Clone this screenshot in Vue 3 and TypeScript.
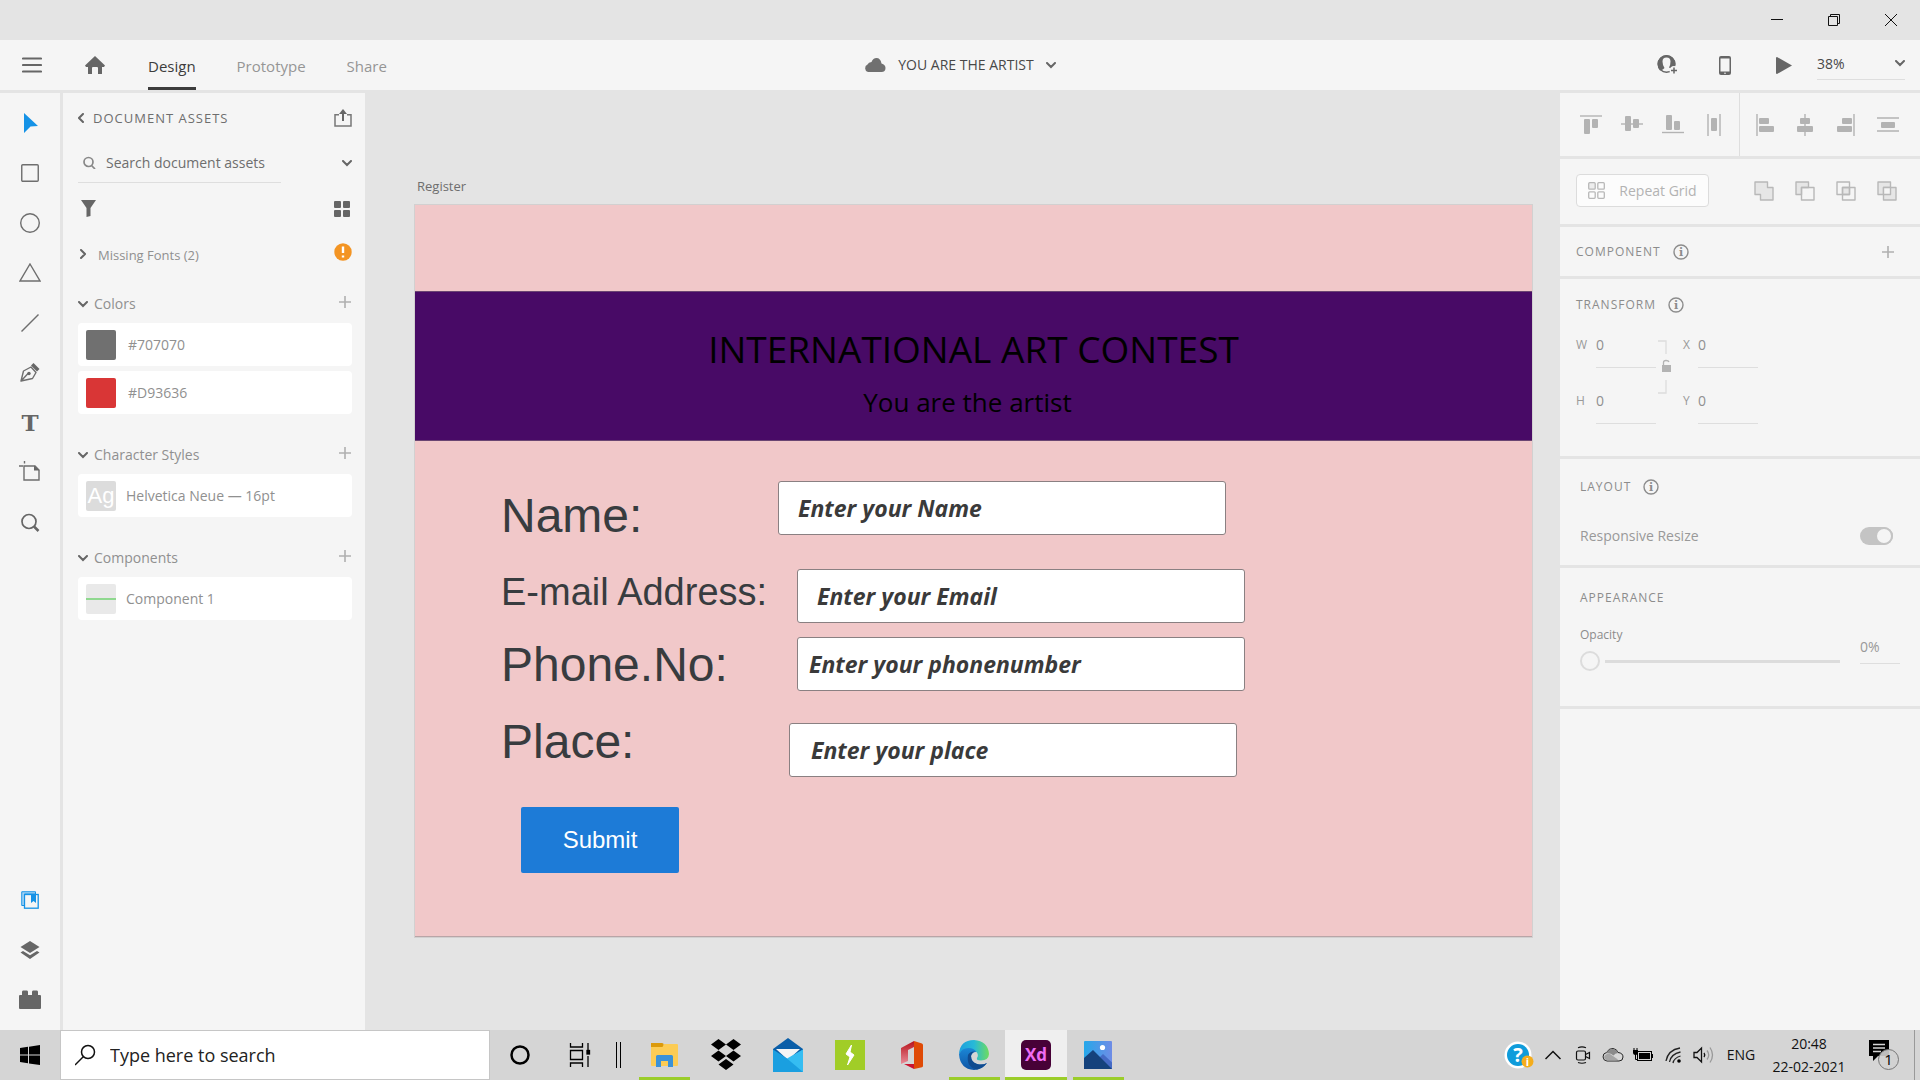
<script setup lang="ts">
import { ref } from 'vue'

interface Field {
  id: string
  label: string
  hint: string
  small?: boolean
  labelTop: number
  left: number
  top: number
  pad: number
}

const fields: Field[] = [
  { id: 'name', label: 'Name:', hint: 'Enter your Name', labelTop: 283, left: 363, top: 276, pad: 19 },
  { id: 'email', label: 'E-mail Address:', hint: 'Enter your Email', small: true, labelTop: 365, left: 382, top: 364, pad: 19 },
  { id: 'phone', label: 'Phone.No:', hint: 'Enter your phonenumber', labelTop: 432, left: 382, top: 432, pad: 11 },
  { id: 'place', label: 'Place:', hint: 'Enter your place', labelTop: 509, left: 374, top: 518, pad: 21 },
]

const colors = ['#707070', '#D93636']
const opacity = ref(0)
const zoom = ref('38%')
const px = (n: number) => n + 'px'
</script>

<template>
  <div class="app">
    <div class="titlebar">
      <button class="win" aria-label="Minimize"><svg width="12" height="12"><path d="M0 5.5h12" stroke="#111" /></svg></button>
      <button class="win" aria-label="Restore"><svg width="12" height="12" fill="none" stroke="#111"><path d="M.5 2.5h9v9h-9zM2.500 2.500v-2h9v9h-2" /></svg></button>
      <button class="win" aria-label="Close"><svg width="12" height="12"><path d="M0 0l12 12M12 0L0 12" stroke="#111" /></svg></button>
    </div>

    <header class="header">
      <div class="head-left">
        <button class="ico" aria-label="Menu"><svg width="20" height="16"><path d="M1 1.500h18M1 8h18M1 14.500h18" stroke="#666" stroke-width="2.200" stroke-linecap="round" /></svg></button>
        <button class="ico home" aria-label="Home"><svg width="20" height="18" fill="#666"><path d="M10 0l10 9.500-1 1.500h-2v6.500q0 .5-.5.5H13v-6q0-1-1-1H8q-1 0-1 1v6H3.500q-.5 0-.5-.5V11H1L0 9.500z" /></svg></button>
        <nav class="tabs">
          <a href="#design" class="tab active">Design</a>
          <a href="#prototype" class="tab">Prototype</a>
          <a href="#share" class="tab">Share</a>
        </nav>
      </div>
      <button class="doc">
        <svg width="22" height="14" fill="#707070"><path d="M4 14a4 4 0 0 1-.5-7.500Q4.500 4 7.500 4 9 0 12.500 0q4 0 5 5.500Q21.500 6.500 21.500 10q0 4-4 4z" /></svg>
        <span>YOU ARE THE ARTIST</span>
        <svg width="10" height="7" fill="none" stroke="#666" stroke-width="2"><path d="M1 1l4 4 4-4" stroke-linecap="round" /></svg>
      </button>
      <div class="head-right">
        <button class="ico" aria-label="Invite"><svg width="21" height="20"><circle cx="9.500" cy="9" r="8.300" fill="#f5f5f5" stroke="#666" stroke-width="1.400" /><path d="M3 15.500Q.5 13 .5 9a9 9 0 0 1 18 0q0 2-1 4l-3.500.5-2-1Q13.500 10 13.500 6.500q0-4-4-4t-4 4q0 3.500 2 6.500-1 1.500-4.500 2.500z" fill="#666" /><circle cx="17" cy="15.500" r="4.500" fill="#f5f5f5" /><path d="M17 12.500v6M14 15.500h6" stroke="#666" stroke-width="1.500" /></svg></button>
        <button class="ico" aria-label="Device preview"><svg width="12" height="19"><rect width="12" height="19" rx="2" fill="#666" /><rect x="1.500" y="2.500" width="9" height="13" fill="#f5f5f5" /><circle cx="6" cy="17.300" r=".8" fill="#f5f5f5" /></svg></button>
        <button class="ico" aria-label="Play"><svg width="16" height="17"><path d="M1 0l15 8.500L1 17q-1 0-1-1V1q0-1 1-1z" fill="#666" /></svg></button>
        <label class="zoom">
          <select v-model="zoom" aria-label="Zoom level"><option>38%</option><option>100%</option></select>
          <svg width="10" height="7" fill="none" stroke="#666" stroke-width="2"><path d="M1 1l4 4 4-4" stroke-linecap="round" /></svg>
        </label>
      </div>
    </header>

    <main class="body">
      <aside class="tools">
        <button aria-label="Select"><svg width="20" height="20"><path d="M4 0l14 13-7.500.5L4 20z" fill="#1592e6" /></svg></button>
        <button aria-label="Rectangle"><svg width="18" height="18"><rect x=".75" y=".75" width="16.500" height="16.500" rx="1" class="ln" /></svg></button>
        <button aria-label="Ellipse"><svg width="20" height="20"><circle cx="10" cy="10" r="9.300" class="ln" /></svg></button>
        <button aria-label="Polygon"><svg width="22" height="20"><path d="M11 1L21 18H1z" class="ln" /></svg></button>
        <button aria-label="Line"><svg width="18" height="18"><path d="M.5 17.500l17-17" class="ln" /></svg></button>
        <button aria-label="Pen"><svg width="20" height="20"><path d="M1 18L3.500 8 11 4 16 9.500 12.500 15.500zM1.500 17.500l7-7.500" class="ln" stroke-linejoin="round" /><circle cx="9" cy="10.500" r="1.700" fill="#666" /><path d="M11 2.500L13.500 0l6 6L17 8.500z" fill="#666" /></svg></button>
        <button aria-label="Text" class="type">T</button>
        <button aria-label="Artboard"><svg width="22" height="24"><path d="M6 5h10l4 4V19H5V5z" class="ln" /><path d="M15 4.500v5h5.500z" fill="#666" /><path d="M5.500 0v2.500M0 5h4" class="ln" /></svg></button>
        <button aria-label="Zoom"><svg width="20" height="20" fill="none" stroke="#666"><circle cx="9" cy="8.500" r="7" stroke-width="1.700" /><path d="M14 13.500l4.500 4.500" stroke-width="2.500" /></svg></button>
        <span class="grow"></span>
        <button aria-label="Assets"><svg width="18" height="18"><path d="M.75 14.500V.75H14.500V3H3.500v11.500z" fill="#a9d5f5" stroke="#1592e6" /><rect x="3.500" y="3.500" width="13.700" height="13.700" fill="#f5f5f5" stroke="#1592e6" stroke-width="1.300" /><path d="M10 3h5v9l-2.500-2-2.500 2z" fill="#1592e6" /></svg></button>
        <button aria-label="Layers"><svg width="20" height="18" fill="#666"><path d="M10 0l9.500 6L10 12 .5 6z" /><path d="M.5 11.500L3 10l7 4.300L17 10l2.500 1.500L10 18z" /></svg></button>
        <button aria-label="Plugins"><svg width="22" height="20" fill="#666"><path d="M1 5h2V2q0-1.500 1-1.500h4q1 0 1 1.500v3h4V2q0-1.500 1-1.500h4Q19 .5 19 2v3h2q1 0 1 1v12q0 1-1 1H1q-1 0-1-1V6q0-1 1-1z" /></svg></button>
      </aside>

      <aside class="assets">
        <div class="row title">
          <button class="back"><svg width="7" height="10" class="chev"><path d="M5 1L1 5l4 4" /></svg>DOCUMENT ASSETS</button>
          <svg width="18" height="18" fill="none" stroke="#777"><path d="M5 5.700H1V17h16V5.700h-4" stroke-width="1.500" /><path d="M9 12V3" stroke="#666" stroke-width="2" /><path d="M5 5l4-5 4 5z" fill="#666" stroke="none" /></svg>
        </div>
        <div class="row search">
          <label class="find"><svg width="13" height="13" fill="none" stroke="#888" stroke-width="1.700"><circle cx="5.500" cy="6" r="4.500" /><path d="M8.500 9.500L12 13" /></svg><input type="text" placeholder="Search document assets" aria-label="Search document assets" /></label>
          <svg width="10" height="7" class="chev"><path d="M1 1l4 4 4-4" /></svg>
        </div>
        <div class="row filter">
          <svg width="16" height="17" fill="#666"><path d="M0 0h15L9.500 8v8l-4 1V8z" /></svg>
          <svg width="16" height="16" fill="#666"><rect width="7" height="7" rx="1" /><rect x="9" width="7" height="7" rx="1" /><rect y="9" width="7" height="7" rx="1" /><rect x="9" y="9" width="7" height="7" rx="1" /></svg>
        </div>
        <div class="row missing">
          <span class="group"><svg width="7" height="12" class="chev"><path d="M2 1l4 4-4 4" /></svg>Missing Fonts (2)</span>
          <svg width="18" height="24"><circle cx="9" cy="9" r="8.700" fill="#f39423" /><path d="M9 3.500v6.500M9 12.500v2" stroke="#fff" stroke-width="2.400" /></svg>
        </div>

        <section class="group-box">
          <div class="row sec"><h3><svg width="10" height="7" class="chev"><path d="M1 1l4 4 4-4" /></svg>Colors</h3><button aria-label="Add color"><svg width="12" height="12" class="plus"><path d="M6 0v12M0 6h12" /></svg></button></div>
          <div v-for="c in colors" :key="c" class="card"><span class="sw" :style="{ background: c }"></span><span class="code">{{ c }}</span></div>
        </section>
        <section class="group-box">
          <div class="row sec"><h3><svg width="10" height="7" class="chev"><path d="M1 1l4 4 4-4" /></svg>Character Styles</h3><button aria-label="Add style"><svg width="12" height="12" class="plus"><path d="M6 0v12M0 6h12" /></svg></button></div>
          <div class="card"><span class="sw ag">Ag</span><span>Helvetica Neue — 16pt</span></div>
        </section>
        <section class="group-box">
          <div class="row sec"><h3><svg width="10" height="7" class="chev"><path d="M1 1l4 4 4-4" /></svg>Components</h3><button aria-label="Add component"><svg width="12" height="12" class="plus"><path d="M6 0v12M0 6h12" /></svg></button></div>
          <div class="card"><span class="sw comp"></span><span>Component 1</span></div>
        </section>
      </aside>

      <section class="canvas">
        <div class="board-name">Register</div>
        <form class="board" @submit.prevent>
          <div class="banner">
            <h1>INTERNATIONAL ART CONTEST</h1>
            <p>You are the artist</p>
          </div>
          <template v-for="f in fields" :key="f.id">
            <label :for="f.id" class="flabel" :class="{ small: f.small }" :style="{ top: px(f.labelTop) }">{{ f.label }}</label>
            <input :id="f.id" type="text" class="finput" :placeholder="f.hint" :style="{ left: px(f.left), top: px(f.top), paddingLeft: px(f.pad) }" />
          </template>
          <button class="submit">Submit</button>
        </form>
      </section>

      <aside class="props">
        <div class="align">
          <div class="half left">
            <button aria-label="Align top"><svg width="22" height="22" class="al"><path d="M0 2h22" /><rect x="4" y="5" width="6" height="15" rx="1" /><rect x="12" y="5" width="6" height="9" rx="1" /></svg></button>
            <button aria-label="Align middle"><svg width="22" height="22" class="al"><path d="M0 10h22" /><rect x="4" y="2" width="6" height="15" rx="1" /><rect x="12" y="5" width="6" height="9" rx="1" /></svg></button>
            <button aria-label="Align bottom"><svg width="22" height="22" class="al"><path d="M0 18.500h22" /><rect x="4" y="1" width="6" height="15" rx="1" /><rect x="12" y="7" width="6" height="9" rx="1" /></svg></button>
            <button aria-label="Distribute horizontally"><svg width="22" height="22" class="al"><path d="M5 0v22M17 0v22" /><rect x="8" y="4" width="6" height="13" rx="1" /></svg></button>
          </div>
          <div class="half">
            <button aria-label="Align left"><svg width="22" height="22" class="al"><path d="M3 0v22" /><rect x="5" y="4" width="10" height="6" rx="1" /><rect x="5" y="12" width="15" height="6" rx="1" /></svg></button>
            <button aria-label="Align center"><svg width="22" height="22" class="al"><path d="M10 0v22" /><rect x="5" y="4" width="10" height="6" rx="1" /><rect x="2" y="12" width="16" height="6" rx="1" /></svg></button>
            <button aria-label="Align right"><svg width="22" height="22" class="al"><path d="M18 0v22" /><rect x="6" y="4" width="10" height="6" rx="1" /><rect x="1" y="12" width="15" height="6" rx="1" /></svg></button>
            <button aria-label="Distribute vertically"><svg width="22" height="22" class="al"><path d="M0 4h22M0 17h22" /><rect x="4" y="8" width="14" height="6" rx="1" /></svg></button>
          </div>
        </div>
        <div class="repeat">
          <button class="rg"><svg width="17" height="17" fill="#eee" stroke="#b8b8b8" stroke-width="1.300"><rect x=".7" y=".7" width="6.500" height="6.500" rx="1" /><g fill="none"><rect x="9.800" y=".7" width="6.500" height="6.500" rx="1" /><rect x=".7" y="9.800" width="6.500" height="6.500" rx="1" /><rect x="9.800" y="9.800" width="6.500" height="6.500" rx="1" /></g></svg>Repeat Grid</button>
          <div class="bool">
            <button aria-label="Add"><svg width="20" height="20" class="bo"><path d="M1 1h12.500v5.500H19V19H6.500v-5.500H1z" fill="#e6e6e6" /></svg></button>
            <button aria-label="Subtract"><svg width="20" height="20" class="bo"><path d="M1 1h12.500v5.500h-7v7H1z" fill="#e6e6e6" /><rect x="6.500" y="6.500" width="12.500" height="12.500" /></svg></button>
            <button aria-label="Intersect"><svg width="20" height="20" class="bo"><rect x="6.500" y="6.500" width="7" height="7" fill="#e6e6e6" /><rect x="1" y="1" width="12.500" height="12.500" /><rect x="6.500" y="6.500" width="12.500" height="12.500" /></svg></button>
            <button aria-label="Exclude overlap"><svg width="20" height="20" class="bo"><rect x="1" y="1" width="12.500" height="12.500" fill="#e6e6e6" /><rect x="6.500" y="6.500" width="12.500" height="12.500" fill="#e6e6e6" /><rect x="6.500" y="6.500" width="7" height="7" fill="#f5f5f5" /></svg></button>
          </div>
        </div>
        <div class="component">
          <h2>COMPONENT <svg width="16" height="16" class="info"><circle cx="8" cy="8" r="7" /><text x="8" y="12">i</text></svg></h2>
          <button aria-label="Make component"><svg width="12" height="12" class="plus"><path d="M6 0v12M0 6h12" /></svg></button>
        </div>
        <div class="transform">
          <h2>TRANSFORM <svg width="16" height="16" class="info"><circle cx="8" cy="8" r="7" /><text x="8" y="12">i</text></svg></h2>
          <div class="dims">
            <div class="pair">
              <label><span>W</span><input type="text" value="0" /></label>
              <label><span>H</span><input type="text" value="0" /></label>
            </div>
            <svg class="lock" width="13" height="54" fill="none" stroke="#dcdcdc" stroke-width="1.300"><path d="M0 1h8v13M8 40v13H0" /><rect x="4" y="25" width="9" height="7" fill="#b3b3b3" stroke="none" /><path d="M5.500 25v-2.500q0-2 2.500-2t3 1.500" stroke="#b3b3b3" /></svg>
            <div class="pair">
              <label class="narrow"><span>X</span><input type="text" value="0" /></label>
              <label class="narrow"><span>Y</span><input type="text" value="0" /></label>
            </div>
          </div>
        </div>
        <div class="layout">
          <h2>LAYOUT <svg width="16" height="16" class="info"><circle cx="8" cy="8" r="7" /><text x="8" y="12">i</text></svg></h2>
          <label class="resize">Responsive Resize<input type="checkbox" checked class="toggle" /></label>
        </div>
        <div class="appearance">
          <h2>APPEARANCE</h2>
          <div class="oprow">
            <div class="opleft">
              <label for="op">Opacity</label>
              <input id="op" v-model="opacity" type="range" min="0" max="100" />
            </div>
            <input class="opval" type="text" :value="opacity + '%'" aria-label="Opacity value" />
          </div>
        </div>
        <div class="rest"></div>
      </aside>
    </main>

    <footer class="taskbar">
      <button class="start" aria-label="Start"><svg width="20" height="20"><path d="M0 3l8-1.200V9.500H0zM9 1.700L20 0v9.500H9zM0 10.500h8v7.800L0 17zM9 10.500h11V20L9 18.400z" /></svg></button>
      <label class="wsearch"><svg width="22" height="22" fill="none" stroke="#111" stroke-width="1.500"><circle cx="13" cy="8" r="6.500" /><path d="M8.500 12.500L0 21" /></svg><input type="text" placeholder="Type here to search" aria-label="Type here to search" /></label>
      <button class="cell sm" aria-label="Cortana"><svg width="20" height="20"><circle cx="10" cy="10" r="8.500" fill="none" stroke="#000" stroke-width="2.500" /></svg></button>
      <button class="cell sm" aria-label="Task view"><svg width="22" height="24" fill="none" stroke="#000" stroke-width="1.300"><path d="M1.500 0v4h12V0M1.500 7.500h12v9h-12zM1.500 24v-4h12v4M19 0v7M19 13v11" /><rect x="18" y="7.500" width="2.500" height="3.500" fill="#000" /></svg></button>
      <span class="bars"></span>

      <button class="cell run" aria-label="File Explorer"><svg width="28" height="26"><path d="M1 4h11l2-2h13q1 0 1 1v20q0 1-1 1H2q-1 0-1-1z" fill="#fccc55" /><path d="M1 1h11q2 0 1.500 2l-1 2H1z" fill="#dc9a0b" /><path d="M6 25V14.500q0-1.500 1.500-1.500h14q1.500 0 1.500 1.500V25h-5v-6h-7v6z" fill="#3b92d8" /></svg></button>
      <button class="cell" aria-label="Dropbox"><svg width="30" height="32"><path d="M7.500 0L15 5.500 7.500 11 0 5.500zM22.500 0L30 5.500 22.500 11 15 5.500zM7.500 11.500L15 17l-7.500 5.500L0 17zM22.500 11.500L30 17l-7.500 5.500L15 17zM15 20l7.500 5.500L15 31 7.500 25.500z" /></svg></button>
      <button class="cell" aria-label="Mail"><svg width="30" height="34"><path d="M15 0l15 11v10H0V11z" fill="#0a5ea8" /><path d="M3 11h24L15 22z" fill="#f5f5f5" /><path d="M0 11.500L15 21l15-9.500V34H0z" fill="#1a9fe0" /><path d="M30 11.500V34L14 20.500z" fill="#35bdf2" /></svg></button>
      <button class="cell" aria-label="Battery saver"><svg width="30" height="30"><rect width="30" height="30" fill="#a1cd27" /><path d="M16.500 5l-5.500 9 4 3-2.500 8 6.500-10-4-3z" fill="#fff" stroke="#fff" /></svg></button>
      <button class="cell" aria-label="Office"><svg width="24" height="29"><defs><linearGradient id="of" x1="0" y1="0" x2="0" y2="1"><stop offset="0" stop-color="#b8121b" /><stop offset="1" stop-color="#e88c98" /></linearGradient></defs><path d="M1 7L14 0v6l-6 3v11l-7 3z" fill="url(#of)" /><path d="M14 0l8 2.500Q23 3 23 4v21q0 1-1 1.300L14 28z" fill="#df4a06" /><path d="M4 23h10v5z" fill="#ca1431" /></svg></button>
      <button class="cell run" aria-label="Edge"><svg width="30" height="30"><defs><linearGradient id="e1"><stop offset="0" stop-color="#1d9fdc" /><stop offset=".5" stop-color="#27b9d8" /><stop offset="1" stop-color="#6fdc5e" /></linearGradient><linearGradient id="e2" x1="0" y1="0" x2="0" y2="1"><stop offset="0" stop-color="#1b87d6" /><stop offset="1" stop-color="#0f55a5" /></linearGradient></defs><path d="M0 14Q1 0 15 0q14 1 15 14-.5 6.500-8 6.500-5 0-4-2.500 2-3-.5-6Q14 8.500 9 9 3 9.500 0 14z" fill="url(#e1)" /><path d="M0 14Q3 8 9.500 8q5.500 0 8 4-4-.5-5.500 4 0 6 6 8 6 1.500 10-1-5 7-13 7Q1 29 0 14z" fill="url(#e2)" /><path d="M9 15q-2 12 9 14.500 6-1.500 10-6.500-5 2.500-10 1-6-2-6-8 .5-3.500 4-4.500-5-.5-7 3.500z" fill="#104b8f" /></svg></button>
      <button class="cell run on" aria-label="Adobe XD"><svg width="30" height="30"><rect width="30" height="30" rx="5" fill="#470137" /><text x="15" y="21" text-anchor="middle" font-size="17" font-weight="700" font-family="Open Sans, sans-serif" fill="#f06cf4">Xd</text></svg></button>
      <button class="cell run" aria-label="Photos"><svg width="28" height="28"><defs><linearGradient id="ph"><stop offset="0" stop-color="#25a8ea" /><stop offset="1" stop-color="#6f8ce6" /></linearGradient></defs><rect width="28" height="28" rx="1" fill="url(#ph)" /><path d="M14 18l5-5 9 8.500V28H14z" fill="#456ac5" /><path d="M0 17L9 9l19 19H0z" fill="#15427c" /><circle cx="18.500" cy="6.500" r="2.600" fill="#fff" /></svg></button>

      <span class="grow"></span>
      <div class="tray">
        <button class="help" aria-label="Get help"><svg width="30" height="28"><circle cx="14" cy="14" r="13.500" fill="#fff" /><circle cx="14" cy="14" r="11" fill="#0f9cdb" /><text x="14" y="21" text-anchor="middle" font-size="20" font-weight="700" font-family="Open Sans, sans-serif" fill="#fff">?</text><circle cx="23.500" cy="20.500" r="6" fill="#f5ad1c" /><text x="23.500" y="24.500" text-anchor="middle" font-size="11" font-weight="700" font-family="Open Sans, sans-serif" fill="#fff">i</text></svg></button>
        <button aria-label="Show hidden icons"><svg width="16" height="10"><path d="M.5 9L8 1.500 15.500 9" fill="none" stroke="#111" stroke-width="1.500" /></svg></button>
        <button aria-label="Meet now"><svg width="16" height="18" fill="none" stroke="#111" stroke-width="1.200"><rect x="1.500" y="5" width="9" height="9" rx="1.500" /><path d="M10.500 8.500l4-2v6l-4-2M3 1.700q4-1.500 8 0M3 16.500q4 1.500 8 0" /></svg></button>
        <button aria-label="OneDrive"><svg width="22" height="16"><path d="M5 14a4.300 4.300 0 0 1-.5-8.500Q7 1 11 1.500q4 .5 5 4 5 .5 5 4.500t-4 4z" fill="#d8d8d8" stroke="#222" /><path d="M4 6.500q3-5 7-4.500 4 .5 5 4-3 0-4.500 2.500Q8 5.500 4 6.500z" fill="#8b8b8b" /><path d="M2 10q2-4 6-3l8 5.500q-1 1-3 1H5q-2.500-.5-3-3.500z" fill="#a5a5a5" /></svg></button>
        <button aria-label="Battery"><svg width="20" height="14"><rect x="4.500" y="3.500" width="14" height="9" fill="none" stroke="#000" /><path d="M6 5h11v6H6zM18.500 6H20v4h-1.500zM0 2h5v3q0 1.500-2 2H2Q0 6.500 0 5z" /><path d="M1 0v3M4 0v3M2.500 6v5.500h2" stroke="#000" fill="none" /></svg></button>
        <button aria-label="Wi-Fi"><svg width="17" height="17" fill="none" stroke="#222" stroke-width="1.300"><path d="M1 14Q3 3 15 1M4.500 15Q6 7 15.500 5M8 16Q9 11 15.500 9" /><circle cx="14" cy="14" r="1.800" fill="#000" stroke="none" /></svg></button>
        <button aria-label="Volume"><svg width="21" height="18" fill="none" stroke="#111" stroke-width="1.300"><path d="M1 6.500h3L8.500 2v14L4 11.500H1zM11 7q1.500 2 0 4" /><path d="M14 4.500q3.500 4.500 0 9M17 1.500q5 7.500 0 15" stroke="#999" /></svg></button>
        <button class="lang">ENG</button>
        <button class="clock"><span>20:48</span><span>22-02-2021</span></button>
        <button class="note" aria-label="Notifications"><svg width="30" height="32"><path d="M0 1h20v16H9l-5 5v-5H0z" /><path d="M4 5.500h12M4 9h12M4 12.500h8" stroke="#d5d5d5" stroke-width="1.300" /><circle cx="19.500" cy="20.500" r="10" fill="#d2d2d2" fill-opacity=".9" stroke="#777" /><text x="19.500" y="26" text-anchor="middle" font-size="15" font-family="Open Sans, sans-serif">1</text></svg></button>
        <span class="peek"></span>
      </div>
    </footer>
  </div>
</template>

<style>
body { margin: 0; }
</style>

<style scoped>
*, *::before, *::after { box-sizing: border-box; }
.app { display: flex; flex-direction: column; min-height: 100vh; background: #e4e4e4; color: #6e6e6e; font-family: "Open Sans", "Noto Sans", sans-serif; font-size: 14px; line-height: 20px; }
button, input, select { font: inherit; color: inherit; background: none; border: 0; padding: 0; margin: 0; outline: none; border-radius: 0; }
button { display: flex; align-items: center; justify-content: center; }
svg { display: block; flex: none; }
h1, h2, h3, p { margin: 0; font-weight: 400; }
.grow { flex: 1; }

.titlebar { height: 40px; display: flex; justify-content: flex-end; padding-right: 1px; }
.win { width: 57px; }

.header { height: 50px; background: #f5f5f5; display: grid; grid-template-columns: 1fr auto 1fr; margin-bottom: 3px; }
.head-left { display: flex; padding-left: 22px; }
.home { margin-left: 43px; }
.tabs { display: flex; gap: 41px; margin-left: 43px; font-size: 15px; }
.tab { color: #959595; text-decoration: none; line-height: 53px; height: 50px; }
.tab.active { color: #3c3c3c; border-bottom: 3px solid #3c3c3c; }
.doc { gap: 12px; color: #484848; }
.head-right { display: flex; justify-content: flex-end; padding-right: 15px; }
.head-right .ico + .ico { margin-left: 41px; }
.head-right .ico:nth-child(3) { margin-left: 45px; }
.zoom { display: flex; align-items: center; width: 88px; margin-left: 25px; height: 32px; margin-top: 8px; border-bottom: 1px solid #dedede; color: #484848; }
.zoom select { flex: 1; appearance: none; }

.body { flex: 1; display: flex; }
.tools { width: 60px; background: #f5f5f5; display: flex; flex-direction: column; padding: 5px 0; margin-right: 3px; }
.tools button { height: 50px; width: 60px; }
.ln { fill: none; stroke: #6e6e6e; stroke-width: 1.4; }
.type { font: 700 23px/50px "DejaVu Serif", serif; color: #666; }

.assets { width: 302px; background: #f5f5f5; padding: 5px 13px 0 15px; }
.row { display: flex; align-items: center; justify-content: space-between; }
.chev { fill: none; stroke: #666; stroke-width: 2; stroke-linecap: round; }
.plus { fill: none; stroke: #b0b0b0; stroke-width: 1.6; }
.title { height: 40px; margin-bottom: 5px; }
.back { gap: 8px; font-size: 13px; letter-spacing: 1px; }
.search { height: 40px; margin-bottom: 5px; }
.find { display: flex; align-items: center; gap: 10px; width: 203px; height: 40px; padding-left: 5px; border-bottom: 1px solid #dedede; }
.find input { flex: 1; min-width: 0; }
.find input::placeholder { color: #6e6e6e; opacity: 1; }
.filter { height: 41px; padding: 0 2px 0 3px; margin-bottom: 6px; }
.missing { height: 40px; margin-bottom: 10px; color: #909090; font-size: 13px; }
.group { display: flex; align-items: center; gap: 12px; padding-left: 1px; }
.sec { height: 38px; }
.sec h3 { display: flex; align-items: center; gap: 6px; font-size: 14px; color: #909090; }
.sec button { padding: 0 1px 4px 0; }
.group-box { margin-bottom: 22px; color: #909090; }
.card { height: 43px; background: #fff; border-radius: 4px; display: flex; align-items: center; padding-left: 8px; gap: 10px; margin-bottom: 5px; }
.card:last-child { margin-bottom: 0; }
.sw { width: 30px; height: 30px; border-radius: 2px; flex: none; }
.code { padding-left: 2px; }
.ag { background: #dcdcdc; color: #fff; font: 22px/30px "Liberation Sans", sans-serif; text-align: center; }
.comp { background: linear-gradient(#8fd88f, #8fd88f) center / 30px 2px no-repeat #e9e9e9; }

.canvas { flex: 1; min-width: 0; padding: 83px 28px 0 50px; }
.board-name { font-size: 13px; height: 29px; padding-left: 2px; }
.board { position: relative; height: 732px; padding-top: 86px; background: #f1c8c9; border-bottom: 1px solid #b9a5a7; box-shadow: 0 0 0 1px #d2d0d0; }
.banner { height: 150px; background: #480a66; border-top: 1px solid #6a4572; border-bottom: 1px solid #6a4572; text-align: center; color: #000; padding-top: 31px; }
.banner h1 { font-size: 37px; line-height: 52px; }
.banner p { font-size: 26px; line-height: 54px; padding-right: 12px; }
.flabel { position: absolute; left: 86px; font: 48px/56px "Liberation Sans", sans-serif; color: #383c3f; white-space: nowrap; }
.flabel.small { font-size: 38px; line-height: 44px; }
.finput { position: absolute; width: 448px; height: 54px; background: #fff; border: 1px solid #8a8082; border-radius: 3px; font-size: 23px; font-weight: 700; font-style: italic; }
.finput::placeholder { color: #3a3a3a; opacity: 1; }
.submit { position: absolute; left: 106px; top: 602px; width: 158px; height: 66px; border-radius: 2px; background: #1d7bd7; color: #fff; font: 24px/28px "Liberation Sans", sans-serif; }

.props { width: 360px; display: flex; flex-direction: column; gap: 3px; color: #999; }
.props > div { background: #f5f5f5; }
.props h2 { display: flex; align-items: center; gap: 12px; font-size: 12px; letter-spacing: 1px; height: 20px; color: #8c8c8c; }
.align { display: flex; height: 63px; }
.half { display: flex; width: 180px; padding-left: 4px; }
.half.left { border-right: 1px solid #dedede; padding-left: 10px; }
.half button { width: 41px; }
.al { fill: #b3b3b3; stroke: none; }
.al path { stroke: #b3b3b3; stroke-width: 1.4; }
.repeat { height: 65px; display: flex; align-items: center; justify-content: space-between; padding: 0 23px 2px 16px; }
.rg { width: 133px; height: 33px; gap: 14px; background: #fcfcfc; border: 1px solid #dcdcdc; border-radius: 4px; color: #b3b3b3; }
.bool { display: flex; gap: 21px; }
.bo { fill: none; stroke: #b8b8b8; stroke-width: 1.4; stroke-linejoin: round; }
.info circle { fill: none; stroke: #8c8c8c; stroke-width: 1.4; }
.info text { fill: #8c8c8c; font: 700 11px "DejaVu Serif", serif; text-anchor: middle; letter-spacing: 0; }
.component { height: 49px; display: flex; align-items: center; justify-content: space-between; padding: 1px 26px 0 16px; }
.transform { height: 177px; padding: 16px 16px 0; }
.dims { display: flex; margin-top: 13px; }
.pair { display: flex; flex-direction: column; gap: 16px; }
.pair label { display: flex; height: 40px; line-height: 34px; font-size: 12px; }
.pair label span { width: 20px; }
.pair .narrow span { width: 15px; }
.pair input { width: 60px; height: 40px; padding-bottom: 6px; border-bottom: 1px solid #dedede; font-size: 14px; color: #909090; }
.lock { margin: 12px 12px 0 2px; }
.layout { height: 106px; padding: 18px 27px 0 20px; }
.resize { display: flex; align-items: center; justify-content: space-between; margin-top: 28px; height: 22px; }
.toggle { appearance: none; width: 33px; height: 18px; border-radius: 9px; background: #c4c4c4; display: flex; justify-content: flex-end; }
.toggle::before { content: ""; width: 18px; height: 18px; border-radius: 9px; background: #f5f5f5; border: 2px solid #c4c4c4; }
.appearance { height: 138px; padding: 20px 20px 0; }
.oprow { display: flex; justify-content: space-between; margin-top: 16px; }
.opleft { width: 260px; font-size: 12px; color: #8c8c8c; }
.opleft label { display: block; line-height: 22px; }
.opleft input { appearance: none; display: block; width: 260px; height: 20px; margin-top: 5px; background: linear-gradient(#dcdcdc, #dcdcdc) right center / 235px 3px no-repeat; }
.opleft input::-webkit-slider-thumb { appearance: none; box-sizing: border-box; width: 20px; height: 20px; border-radius: 10px; border: 2px solid #dcdcdc; background: #f5f5f5; }
.opval { width: 40px; height: 40px; padding-top: 6px; border-bottom: 1px solid #dedede; }
.props > .rest { flex: 1; }

.taskbar { height: 50px; background: #d5d5d5; display: flex; color: #111; }
.start { width: 60px; }
.wsearch { width: 430px; border: 1px solid #c6c6c6; background: #fff; display: flex; align-items: center; gap: 13px; padding-left: 14px; }
.wsearch input { flex: 1; font-size: 18px; height: 40px; }
.wsearch input::placeholder { color: #222; opacity: 1; }
.cell { width: 62px; height: 50px; position: relative; }
.cell.sm { width: 60px; }
.bars { width: 5px; height: 26px; margin: 12px 12px 0 6px; border-left: 1px solid #000; border-right: 1px solid #000; }
.run::after { content: ""; position: absolute; left: 6px; right: 5px; bottom: 0; height: 3px; background: #9bcd2a; }
.on { background: #efefef; }
.on::after { left: 0; right: 0; }
.tray { display: flex; }
.tray button { width: 30px; }
.tray .help { margin-right: 4px; }
.tray .lang { width: 46px; }
.tray .clock { width: 90px; flex-direction: column; line-height: 23px; }
.tray .note { width: 60px; }
.peek { width: 6px; border-left: 1px solid #999; }
</style>
